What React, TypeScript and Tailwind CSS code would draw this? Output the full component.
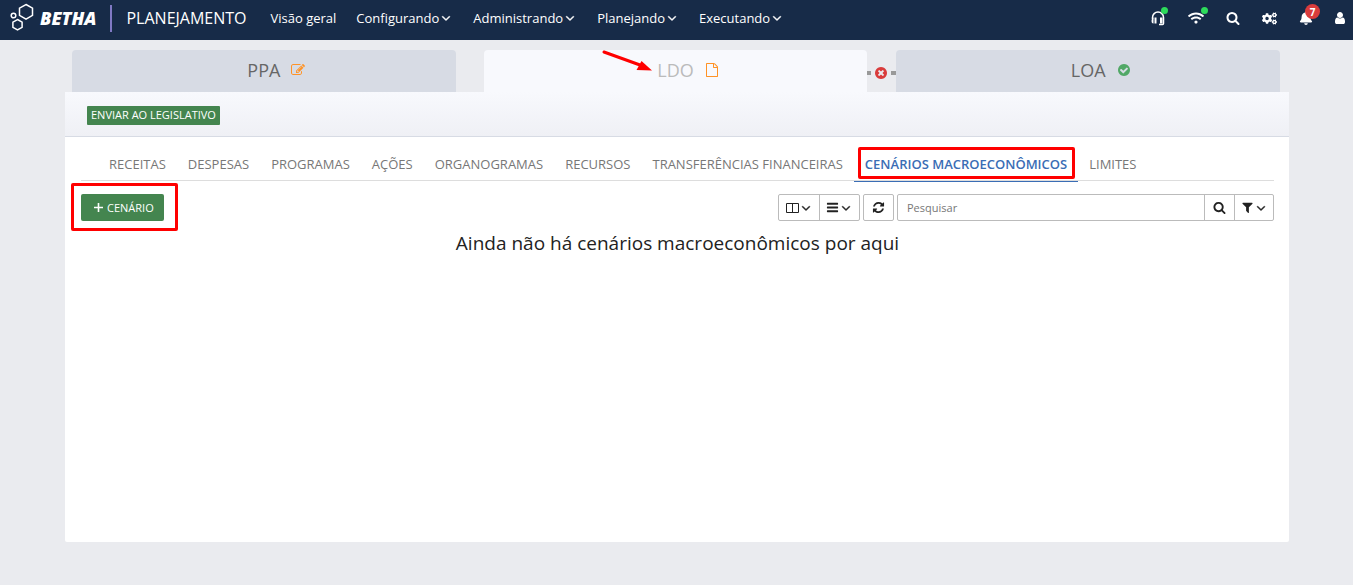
import React, { useState } from 'react';
import { FaBell, FaCogs, FaWifi } from 'react-icons/fa';

const icons = {
  search:
    'M1216 832q0-185-131.5-316.5t-316.5-131.5-316.5 131.5-131.5 316.5 131.5 316.5 316.5 131.5 316.5-131.5 131.5-316.5zm512 832q0 52-38 90t-90 38q-54 0-90-38l-343-342q-179 124-399 124-143 0-273.5-55.5t-225-150-150-225-55.5-273.5 55.5-273.5 150-225 225-150 273.5-55.5 273.5 55.5 225 150 150 225 55.5 273.5q0 220-124 399l343 343q37 37 37 90z',
  angleDown:
    'M1395 736q0 13-10 23l-466 466q-10 10-23 10t-23-10l-466-466q-10-10-10-23t10-23l50-50q10-10 23-10t23 10l393 393 393-393q10-10 23-10t23 10l50 50q10 10 10 23z',
  filter:
    'M1595 295q17 41-14 70l-493 493v742q0 42-39 59-13 5-25 5-27 0-45-19l-256-256q-19-19-19-45v-486l-493-493q-31-29-14-70 17-39 59-39h1280q42 0 59 39z',
  refresh:
    'M1639 1056q0 5-1 7-64 268-268 434.5t-478 166.5q-146 0-282.5-55t-243.5-157l-129 129q-19 19-45 19t-45-19-19-45v-448q0-26 19-45t45-19h448q26 0 45 19t19 45-19 45l-137 137q71 66 161 102t187 36q134 0 250-65t186-179q11-17 53-117 8-23 30-23h192q13 0 22.5 9.5t9.5 22.5zm25-800v448q0 26-19 45t-45 19h-448q-26 0-45-19t-19-45 19-45l138-138q-148-137-349-137-134 0-250 65t-186 179q-11 17-53 117-8 23-30 23h-199q-13 0-22.5-9.5t-9.5-22.5v-7q65-268 270-434.5t480-166.5q146 0 284 55.5t245 156.5l130-129q19-19 45-19t45 19 19 45z',
  bars:
    'M1664 1344v128q0 26-19 45t-45 19h-1408q-26 0-45-19t-19-45v-128q0-26 19-45t45-19h1408q26 0 45 19t19 45zm0-512v128q0 26-19 45t-45 19h-1408q-26 0-45-19t-19-45v-128q0-26 19-45t45-19h1408q26 0 45 19t19 45zm0-512v128q0 26-19 45t-45 19h-1408q-26 0-45-19t-19-45v-128q0-26 19-45t45-19h1408q26 0 45 19t19 45z',
  user:
    'M1536 1399q0 109-62.5 187t-150.5 78h-854q-88 0-150.5-78t-62.5-187q0-85 8.5-160.5t31.5-152 58.5-131 94-89 134.5-34.5q131 128 313 128t313-128q76 0 134.5 34.5t94 89 58.5 131 31.5 152 8.5 160.5zm-256-887q0 159-112.5 271.5t-271.5 112.5-271.5-112.5-112.5-271.5 112.5-271.5 271.5-112.5 271.5 112.5 112.5 271.5z',
  check:
    'M1412 734q0-28-18-46l-91-90q-19-19-45-19t-45 19l-408 407-226-226q-19-19-45-19t-45 19l-91 90q-18 18-18 46 0 27 18 45l362 362q19 19 45 19 27 0 46-19l543-543q18-18 18-45zm252 162q0 209-103 385.5t-279.5 279.5-385.5 103-385.5-103-279.5-279.5-103-385.5 103-385.5 279.5-279.5 385.5-103 385.5 103 279.5 279.5 103 385.5z',
  times:
    'M1277 1122q0-26-19-45l-181-181 181-181q19-19 19-45 0-27-19-46l-90-90q-19-18-46-18-26 0-45 18l-181 181-181-181q-19-18-45-18-27 0-46 18l-90 90q-19 19-19 46 0 26 19 45l181 181-181 181q-19 19-19 45 0 27 19 46l90 90q19 18 46 18 26 0 45-18l181-181 181 181q19 18 45 18 27 0 46-18l90-90q19-19 19-46zm387-226q0 209-103 385.5t-279.5 279.5-385.5 103-385.5-103-279.5-279.5-103-385.5 103-385.5 279.5-279.5 385.5-103 385.5 103 279.5 279.5 103 385.5z',
  file:
    'M1596 380q28 28 48 76t20 88v1152q0 40-28 68t-68 28h-1344q-40 0-68-28t-28-68v-1600q0-40 28-68t68-28h896q40 0 88 20t76 48zm-444-244v376h376q-10-29-22-41l-313-313q-12-12-41-22zm384 1528v-1024h-416q-40 0-68-28t-28-68v-416h-768v1536h1280z',
  edit:
    'M888 1184l116-116-152-152-116 116v56h96v96h56zm440-720q-16-16-33 1l-350 350q-17 17-1 33t33-1l350-350q17-17 1-33zm80 594v190q0 119-84.5 203.5t-203.5 84.5h-832q-119 0-203.5-84.5t-84.5-203.5v-832q0-119 84.5-203.5t203.5-84.5h832q63 0 117 25 15 7 18 23 3 17-9 29l-49 49q-14 14-32 8-23-6-45-6h-832q-66 0-113 47t-47 113v832q0 66 47 113t113 47h832q66 0 113-47t47-113v-126q0-13 9-22l64-64q15-15 35-7t20 29zm-96-738l288 288-672 672h-288v-288zm444 132l-92 92-288-288 92-92q28-28 68-28t68 28l152 152q28 28 28 68t-28 68z',
};

const Icon: React.FC<{ name: keyof typeof icons; className: string }> = ({ name, className }) => (
  <svg viewBox="0 0 1792 1792" fill="currentColor" className={`shrink-0 ${className}`} aria-hidden="true">
    <path d={icons[name]} />
  </svg>
);

const Caret: React.FC = () => (
  <Icon name="angleDown" className="h-[14px] w-[14px] stroke-current stroke-[60px]" />
);

const menus = ['Configurando', 'Administrando', 'Planejando', 'Executando'];

const tabs = [
  'Receitas',
  'Despesas',
  'Programas',
  'Ações',
  'Organogramas',
  'Recursos',
  'Transferências financeiras',
  'Cenários macroeconômicos',
  'Limites',
];

const Navbar: React.FC = () => (
  <header className="flex h-10 items-center bg-[#172b48] pr-[6px] pb-1 text-white">
    <a href="#" aria-label="Betha" className="ml-2 flex items-center">
      <svg width="28" height="32" viewBox="0 0 28 32" fill="none" stroke="currentColor" strokeWidth="1.5" aria-hidden="true">
        <path d="M18 2.500l6.500 3.700v7.200L18 17.200l-6.500-3.800V6.200z" />
        <path d="M9.500 17.500l4.600 2.600v5.200l-4.600 2.700-4.600-2.700v-5.200z" />
        <circle cx="5.500" cy="13.500" r="2.300" />
      </svg>
      <span className="ml-1 text-[18px] leading-5 font-extrabold italic">BETHA</span>
    </a>
    <span className="ml-[14px] h-[27px] w-[2px] bg-[#8079c4]" />
    <a href="#" className="ml-[14px] text-[16px] leading-5">PLANEJAMENTO</a>
    <nav className="ml-6 flex items-center gap-5 text-[13px] leading-5">
      <a href="#">Visão geral</a>
      {menus.map((menu) => (
        <button key={menu} className="flex items-center">
          {menu}
          <Caret />
        </button>
      ))}
    </nav>
    <div className="ml-auto flex items-center gap-[22px]">
      <button aria-label="Suporte" className="relative">
        <svg width="16" height="16" viewBox="0 0 16 16" fill="none" stroke="currentColor" strokeWidth="1.500" aria-hidden="true">
          <path d="M2.500 9V7.500a5.500 5.500 0 0 1 11 0v6q0 1-1 1H9" />
          <path d="M2 8.500q0-1 1-1h.5v6H3q-1.500-.5-1.500-2.500zM4.500 7.500h2v6h-2zM10 7.500h2v6h-2zM12.500 7.500H14v5.500l-1.500.5z" fill="currentColor" stroke="none" />
        </svg>
        <span className="absolute -top-[3px] -right-[2px] h-[7px] w-[7px] rounded-full bg-[#2ddb5b]" />
      </button>
      <button aria-label="Conexão" className="relative">
        <FaWifi className="h-4 w-4" />
        <span className="absolute -top-[3px] -right-1 h-[7px] w-[7px] rounded-full bg-[#2ddb5b]" />
      </button>
      <button aria-label="Buscar">
        <Icon name="search" className="h-[14px] w-[14px]" />
      </button>
      <button aria-label="Configurações">
        <FaCogs className="h-[15px] w-[15px]" />
      </button>
      <div className="flex items-center gap-5">
        <button aria-label="Notificações" className="relative">
          <FaBell className="h-[14px] w-[14px]" />
          <span className="absolute -top-[7px] -right-[7px] flex h-[15px] w-[15px] items-center justify-center rounded-full bg-[#d93c3c] text-[10px] leading-3 font-bold">
            7
          </span>
        </button>
        <button aria-label="Usuário">
          <Icon name="user" className="h-[14px] w-[14px]" />
        </button>
      </div>
    </div>
  </header>
);

const Stages: React.FC = () => (
  <div className="flex h-[42px] pr-[9px] pl-[7px] text-[18px] leading-6">
    <button className="flex flex-1 items-center justify-center gap-[11px] rounded-t bg-[#d7dbe4] pb-[2px] pl-[25px] text-[#666]">
      PPA
      <Icon name="edit" className="h-[14px] w-[14px] text-[#ff9326]" />
    </button>
    <span className="w-7" />
    <button className="relative flex flex-1 items-center justify-center gap-[11px] rounded-t bg-[#f8f9fd] pb-[2px] pl-[25px] text-[#bbb]">
      LDO
      <Icon name="file" className="h-[14px] w-[14px] text-[#ff9326]" />
      <svg className="absolute top-0 left-[118px]" width="52" height="24" viewBox="0 0 52 24" aria-hidden="true">
        <path d="M2 2l36 13" stroke="#f00" strokeWidth="3" strokeLinecap="round" />
        <path d="M50 20.500l-15.500-.5 5-9z" fill="#f00" />
      </svg>
    </button>
    <span className="flex w-[29px] items-center justify-between pt-1">
      <span className="h-1 w-1 bg-[#999]" />
      <Icon name="times" className="h-[14px] w-[14px] text-[#d93c3c]" />
      <span className="h-1 w-[5px] bg-[#999]" />
    </span>
    <button className="flex flex-1 items-center justify-center gap-[11px] rounded-t bg-[#d7dbe4] pb-[2px] pl-[25px] text-[#666]">
      LOA
      <Icon name="check" className="h-[14px] w-[14px] text-[#51a866]" />
    </button>
  </div>
);

const Toolbar: React.FC = () => {
  const [query, setQuery] = useState('');

  return (
    <div className="mt-[13px] flex items-center justify-between">
      <div className="relative">
        <button className="flex h-[27px] items-center rounded-[2px] bg-[#44854f] px-[10px] text-[11px] leading-4 text-white">
          <svg width="15" height="15" viewBox="0 0 15 15" stroke="currentColor" strokeWidth="1.600" aria-hidden="true">
            <path d="M7.500 3v9M3 7.500h9" />
          </svg>
          <span className="ml-px">CENÁRIO</span>
        </button>
        <span className="pointer-events-none absolute -top-[11px] -right-[14px] -bottom-[10px] -left-[10px] rounded-[2px] border-3 border-[#f00]" />
      </div>
      <div className="flex h-[27px] text-[#222]">
        <div className="flex divide-x divide-[#bbb] rounded-[2px] border border-[#bbb]">
          <button aria-label="Colunas" className="flex w-[41px] items-center justify-center">
            <svg width="13" height="12" viewBox="0 0 13 12" fill="none" stroke="currentColor" aria-hidden="true">
              <path d="M.5 1.500h12v9H.5zM6.500 1.500v9" />
            </svg>
            <Caret />
          </button>
          <button aria-label="Densidade" className="flex w-[39px] items-center justify-center">
            <Icon name="bars" className="h-[13px] w-[13px]" />
            <Caret />
          </button>
        </div>
        <button aria-label="Atualizar" className="ml-[3px] flex w-[31px] items-center justify-center rounded-[2px] border border-[#bbb]">
          <Icon name="refresh" className="h-[13px] w-[13px]" />
        </button>
        <div className="ml-[3px] flex divide-x divide-[#bbb] rounded-[2px] border border-[#bbb]">
          <input
            type="text"
            aria-label="Pesquisar"
            placeholder="Pesquisar"
            value={query}
            onChange={(e) => setQuery(e.target.value)}
            className="w-[307px] px-[9px] text-[11px] leading-4 outline-none placeholder:text-[#777]"
          />
          <button aria-label="Pesquisar" className="flex w-[30px] items-center justify-center">
            <Icon name="search" className="h-[13px] w-[13px]" />
          </button>
          <button aria-label="Filtros" className="flex w-[38px] items-center justify-center">
            <Icon name="filter" className="h-[13px] w-[13px]" />
            <Caret />
          </button>
        </div>
      </div>
    </div>
  );
};

const App: React.FC = () => {
  const [active, setActive] = useState('Cenários macroeconômicos');

  return (
    <div className="min-h-screen bg-[#eaebef] pb-[43px] font-['Open_Sans',sans-serif] text-[#222]">
      <Navbar />
      <main className="pt-[10px] pr-16 pl-[65px]">
        <Stages />
        <section className="min-h-[450px] rounded-b-[2px] bg-white">
          <div className="flex h-[45px] items-center border-b border-[#d7dbe4] bg-linear-to-b from-[#f8f9fd] to-[#eff0f5] px-[22px] pt-[2px]">
            <button className="h-[19px] rounded-[1px] bg-[#44854f] px-1 text-[11px] leading-4 text-white">
              ENVIAR AO LEGISLATIVO
            </button>
          </div>
          <div className="pr-[15px] pl-4 pt-2">
            <nav className="flex h-9 border-b border-[#ddd] pl-[17px] text-[13px] leading-5">
              {tabs.map((tab) => (
                <a
                  key={tab}
                  href="#"
                  onClick={() => setActive(tab)}
                  className={`relative flex h-[37px] items-center border-b px-[11px] pt-[2px] whitespace-nowrap uppercase ${
                    tab === active ? 'border-[#3a6db5] font-semibold text-[#3a6db5]' : 'border-transparent text-[#777]'
                  }`}
                >
                  {tab}
                  {tab === active && (
                    <span className="pointer-events-none absolute top-[2px] right-[3px] bottom-[2px] left-1 rounded-[2px] border-3 border-[#f00]" />
                  )}
                </a>
              ))}
            </nav>
            <Toolbar />
            <p className="mt-2 text-center text-[19px] leading-7">Ainda não há cenários macroeconômicos por aqui</p>
          </div>
        </section>
      </main>
    </div>
  );
};

export default App;
